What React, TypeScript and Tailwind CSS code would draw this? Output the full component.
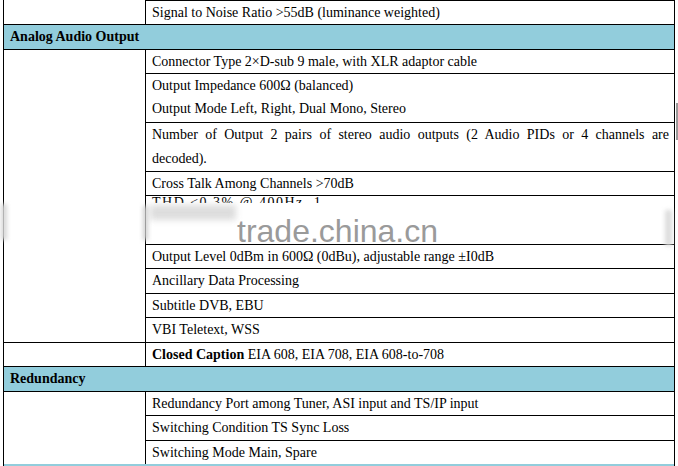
import React from "react";

const Cell = ({ h, children, justify, last }: { h: string; children?: React.ReactNode; justify?: boolean; last?: boolean }) => (
  <div className={`${h} ${last ? "" : "border-b"} border-black pl-[6px] pr-[5px] leading-[24px] overflow-hidden ${justify ? "text-justify" : ""}`}>
    {children}
  </div>
);

const Header = ({ children, h }: { children: React.ReactNode; h: string }) => (
  <div className={`${h} border-b border-black bg-[#92cddc] pl-[6px] font-bold leading-[24px]`}>{children}</div>
);

export default function App() {
  return (
    <div className="relative w-[678px] h-[466px] overflow-hidden bg-white text-black text-[14px] font-['Liberation_Serif','Times_New_Roman',serif]">
      <div className="ml-[3px] w-[672px] border-x border-black">
        {/* top group */}
        <div className="flex">
          <div className="w-[142px] shrink-0 border-r border-b border-black" />
          <div className="flex-1 flex flex-col">
            <div className="h-[25px] border-t border-b border-black pl-[6px] leading-[23px]">Signal to Noise Ratio &gt;55dB (luminance weighted)</div>
          </div>
        </div>

        <Header h="h-[25px]">Analog Audio Output</Header>

        <div className="flex">
          <div className="w-[142px] shrink-0 border-r border-b border-black" />
          <div className="flex-1 flex flex-col">
            <Cell h="h-[24px]">Connector Type 2×D-sub 9 male, with XLR adaptor cable</Cell>
            <Cell h="h-[49px]">
              <div>Output Impedance 600Ω (balanced)</div>
              <div className="-mt-[1px]">Output Mode Left, Right, Dual Mono, Stereo</div>
            </Cell>
            <Cell h="h-[49px]" justify>
              Number of Output 2 pairs of stereo audio outputs (2 Audio PIDs or 4 channels are decoded).
            </Cell>
            <Cell h="h-[24px]">Cross Talk Among Channels &gt;70dB</Cell>
            <Cell h="h-[49px]">
              <div className="-mt-[5px] tracking-[1.5px]">THD ≤0.3% @ 400Hz, 1KHz test tone</div>
            </Cell>
            <Cell h="h-[24px]">Output Level 0dBm in 600Ω (0dBu), adjustable range ±I0dB</Cell>
            <Cell h="h-[25px]">Ancillary Data Processing</Cell>
            <Cell h="h-[24px]">Subtitle DVB, EBU</Cell>
            <Cell h="h-[25px]">VBI Teletext, WSS</Cell>
          </div>
        </div>

        <div className="flex">
          <div className="w-[142px] shrink-0 border-r border-b border-black" />
          <div className="flex-1 flex flex-col">
            <Cell h="h-[24px]">
              <b>Closed Caption</b> EIA 608, EIA 708, EIA 608-to-708
            </Cell>
          </div>
        </div>

        <Header h="h-[25px]">Redundancy</Header>

        <div className="flex">
          <div className="w-[142px] shrink-0 border-r border-black" />
          <div className="flex-1 flex flex-col">
            <Cell h="h-[24px]">Redundancy Port among Tuner, ASI input and TS/IP input</Cell>
            <Cell h="h-[25px]">Switching Condition TS Sync Loss</Cell>
            <Cell h="h-[23px]" last>Switching Mode Main, Spare</Cell>
          </div>
        </div>

        <div className="h-[10px] bg-[#92cddc]" />
      </div>

      {/* watermark overlay */}
      <div className="absolute left-[146px] top-[203px] w-[526px] h-[41px] bg-white" />
      <div className="absolute left-[320px] top-[196px] w-[352px] h-[10px] bg-white" />
      <div className="absolute left-[150px] top-[205px] w-[86px] h-[15px] bg-[#d4d4d4] blur-[3px] opacity-80" />
      <div className="absolute left-[1px] top-[204px] w-[6px] h-[36px] bg-[#d8d8d8] blur-[2px]" />
      <div className="absolute left-[143px] top-[206px] w-[5px] h-[34px] bg-[#d0d0d0] blur-[2px]" />
      <div className="absolute left-[665px] top-[210px] w-[7px] h-[36px] bg-[#dcdcdc] blur-[2px]" />
      <div className="absolute left-[237px] top-[215px] text-[32px] leading-none text-[#9a9a9a] font-['Liberation_Sans',Arial,sans-serif]">
        trade.china.cn
      </div>
      <div className="absolute left-[676px] top-[103px] w-[2px] h-[37px] bg-[#9a9a9a]" />
    </div>
  );
}
